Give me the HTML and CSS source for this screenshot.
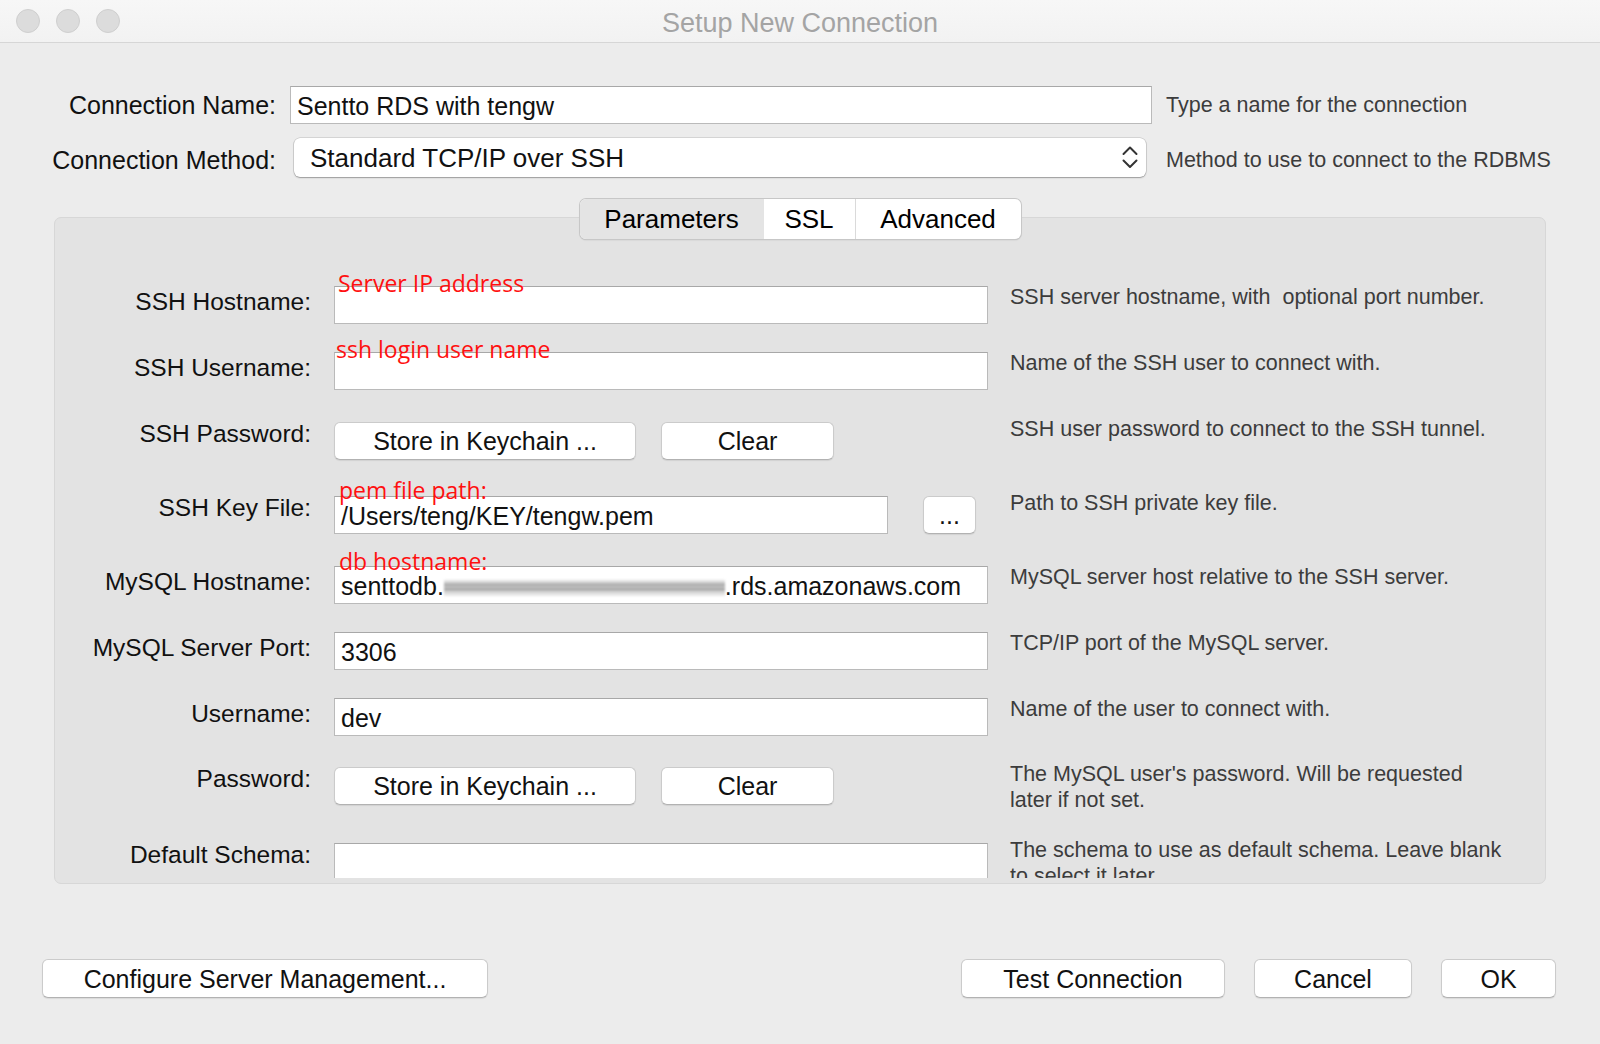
FILE: index.html
```html
<!DOCTYPE html>
<html lang="en">
<head>
<meta charset="utf-8">
<title>Setup New Connection</title>
<link rel="stylesheet" href="styles.css">
</head>
<body>
<div class="window">
  <header class="titlebar">
    <div class="lights"><span class="light"></span><span class="light"></span><span class="light"></span></div>
    <div class="title">Setup New Connection</div>
    <div></div>
  </header>

  <section class="top-form">
    <div class="top-label">Connection Name:</div>
    <div class="textfield">Sentto RDS with tengw</div>
    <div class="top-hint">Type a name for the connection</div>

    <div class="top-label shift">Connection Method:</div>
    <div class="popup">
      <span>Standard TCP/IP over SSH</span>
      <svg class="chevron" width="16" height="23" viewBox="0 0 16 23"><path d="M1.5 8 L8 1.5 L14.5 8 M1.5 14.5 L8 21 L14.5 14.5" fill="none" stroke="#333" stroke-width="2" stroke-linecap="round" stroke-linejoin="round"/></svg>
    </div>
    <div class="top-hint shift">Method to use to connect to the RDBMS</div>
  </section>

  <section class="tabview">
    <div class="tabs">
      <div class="segmented">
        <div class="tab tab-params active">Parameters</div>
        <div class="tab tab-ssl">SSL</div>
        <div class="tab tab-adv">Advanced</div>
      </div>
    </div>
    <div class="panel">
      <div class="panel-body">
        <div class="label">SSH Hostname:</div>
        <div class="cell"><div class="textfield full"><span class="note">Server IP address</span></div></div>
        <div class="hint">SSH server hostname, with&nbsp; optional port number.</div>

        <div class="label">SSH Username:</div>
        <div class="cell"><div class="textfield full"><span class="note note-b">ssh login user name</span></div></div>
        <div class="hint">Name of the SSH user to connect with.</div>

        <div class="label lift">SSH Password:</div>
        <div class="cell buttons"><div class="btn btn-store">Store in Keychain ...</div><div class="btn btn-clear">Clear</div></div>
        <div class="hint lift">SSH user password to connect to the SSH tunnel.</div>

        <div class="label lift">SSH Key File:</div>
        <div class="cell keyrow"><div class="textfield keyfield"><span class="note note-c">pem file path:</span>/Users/teng/KEY/tengw.pem</div><div class="btn btn-dots">...</div></div>
        <div class="hint lift">Path to SSH private key file.</div>

        <div class="label">MySQL Hostname:</div>
        <div class="cell"><div class="textfield full"><span class="note note-d">db hostname:</span>senttodb.<span class="blurred"></span>.rds.amazonaws.com</div></div>
        <div class="hint">MySQL server host relative to the SSH server.</div>

        <div class="label">MySQL Server Port:</div>
        <div class="cell"><div class="textfield full">3306</div></div>
        <div class="hint">TCP/IP port of the MySQL server.</div>

        <div class="label">Username:</div>
        <div class="cell"><div class="textfield full">dev</div></div>
        <div class="hint">Name of the user to connect with.</div>

        <div class="label lift">Password:</div>
        <div class="cell buttons"><div class="btn btn-store">Store in Keychain ...</div><div class="btn btn-clear">Clear</div></div>
        <div class="hint lift">The MySQL user's password. Will be requested<br>later if not set.</div>

        <div class="label lift">Default Schema:</div>
        <div class="cell"><div class="textfield full"></div></div>
        <div class="hint lift">The schema to use as default schema. Leave blank<br>to select it later.</div>
      </div>
    </div>
  </section>

  <footer class="footer">
    <div class="btn btn-big btn-configure">Configure Server Management...</div>
    <div class="footer-right">
      <div class="btn btn-big btn-test">Test Connection</div>
      <div class="btn btn-big btn-cancel">Cancel</div>
      <div class="btn btn-big btn-ok">OK</div>
    </div>
  </footer>
</div>
</body>
</html>
```

FILE: styles.css
```css
* { box-sizing: border-box; }
html, body { margin: 0; padding: 0; }
body {
  width: 1600px;
  height: 1044px;
  overflow: hidden;
  background: #ececec;
  font-family: "Liberation Sans", Arial, sans-serif;
  color: #111;
}

/* title bar */
.titlebar {
  height: 43px;
  display: grid;
  grid-template-columns: 1fr auto 1fr;
  align-items: center;
  background: linear-gradient(#f7f7f7, #f2f2f2);
  border-bottom: 1px solid #d6d6d6;
}
.lights { display: flex; gap: 16px; padding-left: 16px; }
.light {
  width: 24px; height: 24px; border-radius: 50%;
  background: #dcdcdc; border: 1px solid #cfcfcf;
}
.title { font-size: 27px; line-height: 38px; margin-top: 4px; color: #a4a4a4; white-space: nowrap; }

/* top form */
.top-form {
  margin-top: 43px;
  display: grid;
  grid-template-columns: 276px 862px 1fr;
  grid-template-rows: 38px 39px;
  column-gap: 14px;
  row-gap: 14px;
  align-items: center;
}
.top-label { text-align: right; font-size: 25px; white-space: nowrap; color: #111; }
.top-hint { font-size: 21.5px; color: #3c3c3c; white-space: nowrap; }
.shift { margin-top: 6px; }

.textfield {
  position: relative;
  height: 38px;
  background: #fff;
  border: 1px solid #bababa;
  border-top-color: #a8a8a8;
  font-size: 25px;
  line-height: 33px;
  padding: 3px 6px 0;
  white-space: nowrap;
  color: #111;
}
.popup {
  height: 39px;
  margin: 0 6px 0 4px;
  background: #fff;
  border-radius: 6px;
  box-shadow: 0 0 0 0.5px rgba(0,0,0,0.2), 0 1px 1.5px rgba(0,0,0,0.28);
  display: flex;
  align-items: center;
  justify-content: space-between;
  padding: 1px 8px 0 16px;
  font-size: 26px;
  white-space: nowrap;
}
.chevron { display: block; margin-top: -1px; }

/* tab view */
.tabview { margin-top: 22px; }
.tabs {
  display: flex;
  justify-content: center;
  margin-bottom: -22px;
  position: relative;
  z-index: 1;
}
.segmented {
  display: flex;
  height: 40px;
  background: #fff;
  border-radius: 6px;
  box-shadow: 0 0 0 1px #c7c7c7, 0 1px 1.5px rgba(0,0,0,0.22);
  overflow: hidden;
}
.tab { font-size: 26px; line-height: 40px; text-align: center; color: #000; white-space: nowrap; }
.tab.active { background: #e4e4e4; }
.tab-params { width: 184px; }
.tab-ssl { width: 91px; }
.tab-adv { width: 166px; border-left: 1px solid #dadada; }

.panel {
  margin: 0 54px;
  height: 667px;
  background: #e3e3e3;
  border: 1px solid #d7d7d7;
  border-radius: 7px;
  padding-bottom: 5px;
}
.panel-body {
  height: 660px;
  overflow: hidden;
  padding-top: 68px;
  display: grid;
  grid-template-columns: 279px 654px 1fr;
  grid-template-rows: 66px 70px 74px 70px 66px 66px 69px 76px 1fr;
}
.label {
  font-size: 24.5px;
  line-height: 38px;
  text-align: right;
  padding-right: 23px;
  margin-top: -3px;
  white-space: nowrap;
  color: #111;
}
.label.lift { margin-top: -7px; }
.hint {
  font-size: 21.5px;
  line-height: 25.5px;
  color: #3c3c3c;
  padding-left: 22px;
  margin-top: -1px;
  white-space: nowrap;
}
.hint.lift { margin-top: -5px; }

.full { width: 654px; }
.buttons { display: flex; gap: 25px; align-items: flex-start; }
.keyrow { display: flex; gap: 35px; align-items: flex-start; }
.keyfield { width: 554px; }

.btn {
  height: 38px;
  background: #fff;
  border: 1px solid #cbcbcb;
  border-bottom-color: #b2b2b2;
  border-radius: 6px;
  box-shadow: 0 1px 1px rgba(0,0,0,0.08);
  font-size: 25px;
  line-height: 35px;
  padding-top: 1px;
  text-align: center;
  white-space: nowrap;
  color: #111;
}
.btn-store { width: 302px; }
.btn-clear { width: 173px; }
.btn-dots { width: 53px; }

.note {
  position: absolute;
  left: 3px;
  top: -15px;
  font-family: "Open Sans", "Liberation Sans", sans-serif;
  font-size: 23px;
  line-height: 23px;
  color: #ff1010;
  white-space: nowrap;
}
.note-b { left: 1px; }
.note-c { left: 4px; top: -18px; }
.note-d { left: 4px; top: -17px; }

.blurred {
  display: inline-block;
  width: 281px;
  height: 18px;
  vertical-align: -2px;
  background: linear-gradient(180deg,
    rgba(220,220,220,0) 0%,
    #d4d4d4 18%,
    #a6a6a6 34%,
    #c9c9c9 46%,
    #9f9f9f 56%,
    #d2d2d2 70%,
    #e6e6e6 86%,
    rgba(235,235,235,0) 100%);
  filter: blur(1.2px);
}

/* footer */
.footer {
  margin-top: 75px;
  padding: 0 44px 0 42px;
  display: flex;
  justify-content: space-between;
}
.footer-right { display: flex; gap: 29px; }
.btn-big { height: 39px; line-height: 35px; padding-top: 2px; }
.btn-configure { width: 446px; }
.btn-test { width: 264px; }
.btn-cancel { width: 158px; }
.btn-ok { width: 115px; }
```
